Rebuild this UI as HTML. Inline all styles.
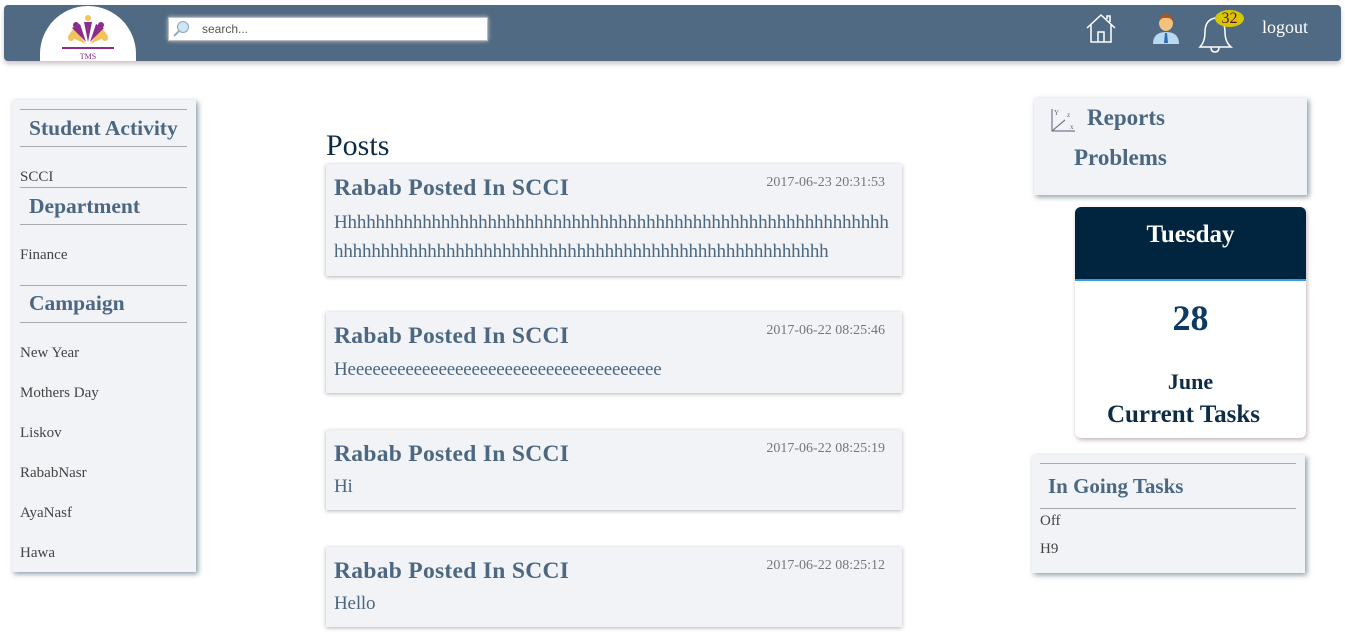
<!DOCTYPE html>
<html><head><style>
body{margin:0;width:1345px;height:635px;overflow:hidden;background:#fff;font-family:"Liberation Serif",serif;position:relative}
.abs{position:absolute}
.hdr{left:4px;top:5px;width:1337px;height:56px;background:#4f6a82;border-radius:4px;box-shadow:0 3px 4px rgba(120,90,100,.35)}
.panel{position:absolute;background:#f2f3f6;box-shadow:2px 2px 5px rgba(60,90,110,.6)}
.c{color:#4b6781}
.post{position:absolute;left:326px;width:576px;background:#f2f3f6;box-shadow:0 1px 4px rgba(0,0,0,.3)}
.post h3{margin:0;position:absolute;left:8px;top:11px;font-size:23.5px;color:#4b6781;font-weight:bold;letter-spacing:0.3px}
.post .d{position:absolute;right:17px;top:11px;font-size:14px;color:#777}
.post p{margin:0;position:absolute;left:8px;top:44px;font-size:19px;color:#4b6781;line-height:29px;letter-spacing:-0.17px}
.hr{position:absolute;height:1px;background:#aaa}
.lt{position:absolute;left:20px;font-size:15px;color:#444}
.lh{position:absolute;left:29px;font-size:21.5px;font-weight:bold;color:#4b6781}
</style></head><body>
<div class="abs hdr"></div>
<div class="abs" style="left:40px;top:6px;width:96px;height:55px;background:#fff;border-radius:50px 50px 0 0;overflow:hidden">
<svg width="96" height="55"><g fill="#f5c25a"><path d="M28 30 L46 38 L34 22Z"/><path d="M68 30 L50 38 L62 22Z"/><circle cx="31" cy="32" r="3"/><circle cx="65" cy="32" r="3"/><circle cx="48" cy="12" r="3"/></g><g fill="#8c2c8c"><path d="M32 22 L46 36 L40 18Z"/><path d="M64 22 L50 36 L56 18Z"/><path d="M44 16 L48 36 L52 16Z"/><circle cx="36" cy="19" r="3"/><circle cx="61" cy="19" r="3"/></g><rect x="22" y="41" width="52" height="2" fill="#8c2c8c"/><text x="48" y="53" font-size="8" fill="#8c2c8c" text-anchor="middle" font-family="Liberation Serif">TMS</text></svg></div>
<div class="abs" style="left:168px;top:17px;width:318px;height:22px;background:#fff;box-shadow:0 0 4px #ccc;border:1px solid #bbb"><svg class="abs" style="left:3px;top:2px" width="18" height="17"><circle cx="11" cy="7" r="5.5" fill="#cfe4f5" stroke="#8ab" /><path d="M7 11 L2 16" stroke="#9ab" stroke-width="2"/></svg><span class="abs" style="left:33px;top:4px;font:12px 'Liberation Sans',sans-serif;color:#555">search...</span></div>
<svg class="abs" style="left:1085px;top:12px" width="32" height="32" fill="none" stroke="#fff" stroke-width="1.5"><path d="M2 16 L16 3 L30 16"/><path d="M6 13 V30 H26 V13"/><path d="M13 30 V20 H19 V30"/><path d="M22 7 V4 H25 V10"/></svg>
<svg class="abs" style="left:1151px;top:12px" width="30" height="33"><path d="M2 32 Q2 20 15 20 Q28 20 28 32Z" fill="#b8d9ef"/><path d="M14 21 L16 21 L17 31 L13 31Z" fill="#2b6cb0"/><ellipse cx="15" cy="11" rx="7" ry="8" fill="#f4c27a"/><path d="M8 10 Q8 2 15 2 Q22 2 22 10 Q20 5 15 6 Q10 5 8 10Z" fill="#a0582c"/></svg>
<svg class="abs" style="left:1198px;top:14px" width="36" height="40" fill="none" stroke="#fff" stroke-width="1.5"><path d="M17 4 Q7 6 7 18 Q7 28 2 33 H33 Q27 28 27 18 Q27 6 17 4Z"/><path d="M13 33 Q13 38 17 38 Q21 38 21 33"/></svg>
<div class="abs" style="left:1215px;top:10px;width:29px;height:17px;background:#d6c800;border-radius:50%;text-align:center;font-size:16px;line-height:17px;color:#5a0a2a">32</div>
<div class="abs" style="left:1262px;top:17px;color:#fff;font-size:18px">logout</div>

<div class="panel" style="left:12px;top:100px;width:184px;height:472px"></div>
<div class="hr" style="left:20px;top:109px;width:167px"></div>
<div class="lh" style="top:116px">Student Activity</div>
<div class="hr" style="left:20px;top:146px;width:167px"></div>
<div class="lt" style="top:169px">SCCI</div>
<div class="hr" style="left:20px;top:187px;width:167px"></div>
<div class="lh" style="top:194px">Department</div>
<div class="hr" style="left:20px;top:224px;width:167px"></div>
<div class="lt" style="top:247px">Finance</div>
<div class="hr" style="left:20px;top:285px;width:167px"></div>
<div class="lh" style="top:291px">Campaign</div>
<div class="hr" style="left:20px;top:322px;width:167px"></div>
<div class="lt" style="top:345px">New Year</div>
<div class="lt" style="top:385px">Mothers Day</div>
<div class="lt" style="top:425px">Liskov</div>
<div class="lt" style="top:465px">RababNasr</div>
<div class="lt" style="top:505px">AyaNasf</div>
<div class="lt" style="top:545px">Hawa</div>

<div class="abs" style="left:326px;top:129px;font-size:30px;color:#0d2c47">Posts</div>
<div class="post" style="top:164px;height:112px"><h3>Rabab Posted In SCCI</h3><span class="d">2017-06-23 20:31:53</span><p>Hhhhhhhhhhhhhhhhhhhhhhhhhhhhhhhhhhhhhhhhhhhhhhhhhhhhhhhhhhh<br>hhhhhhhhhhhhhhhhhhhhhhhhhhhhhhhhhhhhhhhhhhhhhhhhhhhhh</p></div>
<div class="post" style="top:312px;height:81px"><h3>Rabab Posted In SCCI</h3><span class="d">2017-06-22 08:25:46</span><p style="top:43px">Heeeeeeeeeeeeeeeeeeeeeeeeeeeeeeeeeeeeee</p></div>
<div class="post" style="top:430px;height:80px"><h3>Rabab Posted In SCCI</h3><span class="d">2017-06-22 08:25:19</span><p style="top:42px">Hi</p></div>
<div class="post" style="top:547px;height:80px"><h3>Rabab Posted In SCCI</h3><span class="d">2017-06-22 08:25:12</span><p style="top:42px">Hello</p></div>

<div class="panel" style="left:1034px;top:98px;width:273px;height:97px"></div>
<svg class="abs" style="left:1049px;top:106px" width="28" height="28" fill="none" stroke="#778" stroke-width="1.2"><path d="M3 3 V25 H26"/><path d="M3 25 L16 14"/><text x="5" y="9" font-size="7" fill="#667" stroke="none">Y</text><text x="18" y="11" font-size="7" fill="#667" stroke="none">z</text><text x="21" y="23" font-size="7" fill="#667" stroke="none">x</text></svg>
<div class="abs c" style="left:1087px;top:105px;font-size:23px;font-weight:bold">Reports</div>
<div class="abs c" style="left:1074px;top:145px;font-size:23px;font-weight:bold">Problems</div>

<div class="abs" style="left:1075px;top:207px;width:231px;height:231px;background:#fff;border-radius:6px;box-shadow:1px 2px 4px rgba(100,70,80,.4);overflow:hidden">
<div style="height:72px;background:#02253f;border-bottom:2px solid #3b9be0;color:#fff;text-align:center;font-size:25px;font-weight:bold;line-height:56px">Tuesday</div>
<div style="text-align:center;font-size:36px;font-weight:bold;color:#0d3a62;margin-top:16px">28</div>
<div style="text-align:center;font-size:22px;font-weight:bold;color:#0d2c47;margin-top:30px;line-height:26px">June</div>
<div style="text-align:center;font-size:25px;font-weight:bold;color:#0d2c47;margin-top:6px;margin-left:-14px;line-height:28px">Current Tasks</div>
</div>

<div class="panel" style="left:1032px;top:455px;width:273px;height:118px"></div>
<div class="hr" style="left:1040px;top:463px;width:256px"></div>
<div class="abs c" style="left:1048px;top:474px;font-size:21px;font-weight:bold">In Going Tasks</div>
<div class="hr" style="left:1040px;top:508px;width:256px"></div>
<div class="lt" style="left:1040px;top:513px">Off</div>
<div class="lt" style="left:1040px;top:541px">H9</div>
</body></html>
